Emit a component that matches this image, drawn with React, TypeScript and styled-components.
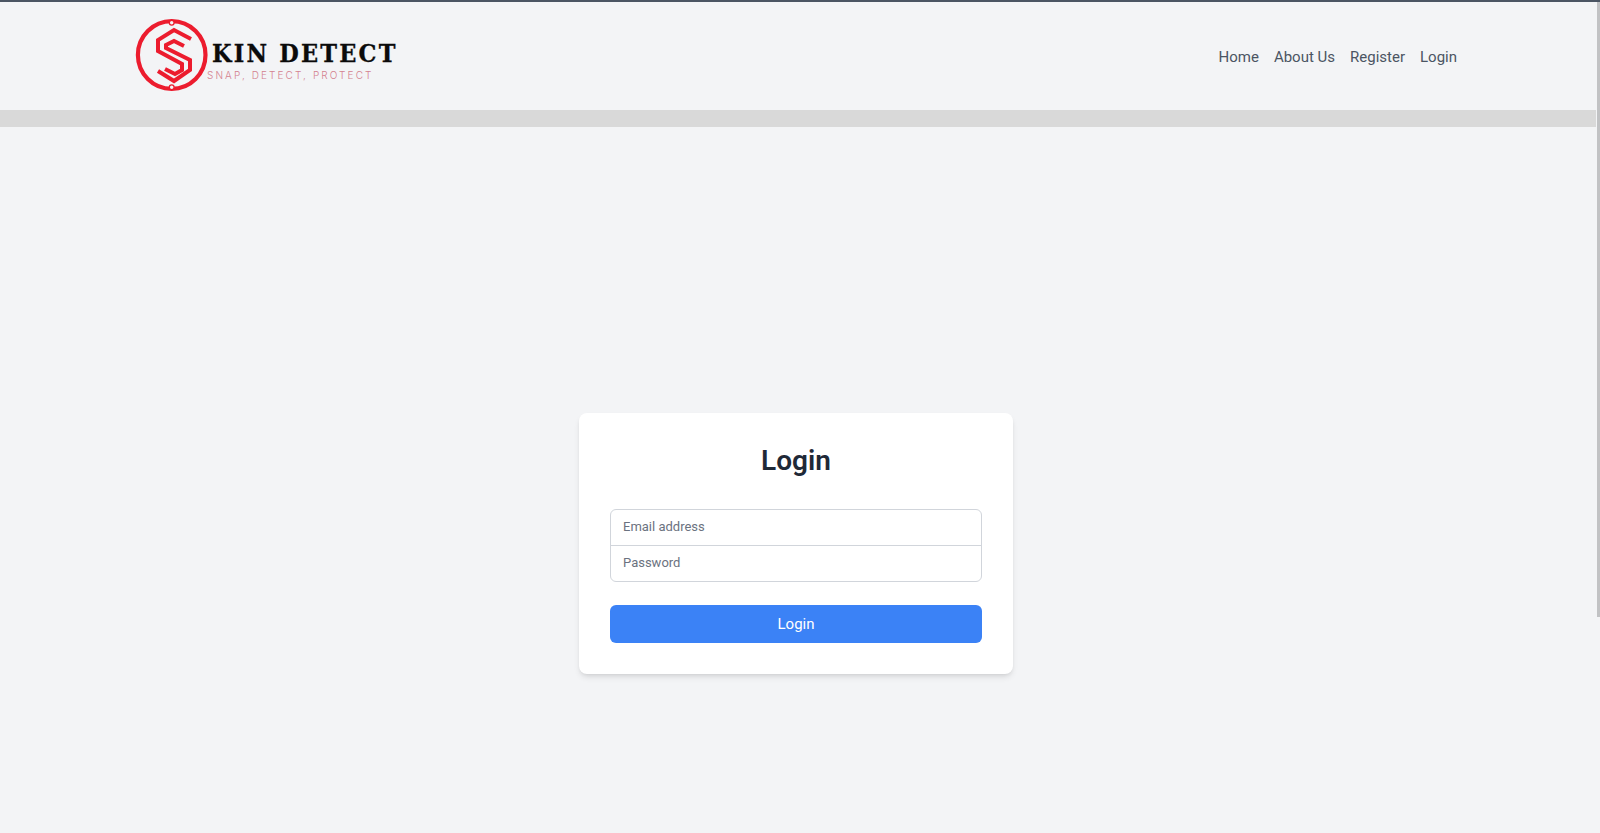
import styled, { createGlobalStyle } from 'styled-components';

const navLinks = ['Home', 'About Us', 'Register', 'Login'];

export default function App() {
  return (
    <>
      <GlobalStyle />
      <Shell>
        <Page>
          <Header>
            <Logo>
              <LogoMark viewBox="0 0 80 80">
                <circle cx="41.7" cy="41" r="33.8" fill="none" stroke="#ec1c2e" strokeWidth="4.2" />
                <circle cx="41.7" cy="8.8" r="2.4" fill="#f3f4f6" stroke="#ec1c2e" strokeWidth="1.3" />
                <circle cx="41.7" cy="73.3" r="2.4" fill="#f3f4f6" stroke="#ec1c2e" strokeWidth="1.3" />
                <g transform="translate(2 1)" fill="none" stroke="#ec1c2e" strokeWidth="4">
                  <path d="M59 24 L42 15 L26 25 L26 36 L50 49 L50 55 L43 59 L33 54" />
                  <path d="M52 31 L42 26 L34 30 L34 33 L58 45 L58 55 L42 66 L26 56" />
                </g>
              </LogoMark>
              <LogoText>
                <LogoName>KIN DETECT</LogoName>
                <LogoTagline>SNAP, DETECT, PROTECT</LogoTagline>
              </LogoText>
            </Logo>
            <Nav>
              {navLinks.map((link) => (
                <NavLink key={link}>{link}</NavLink>
              ))}
            </Nav>
          </Header>
          <GrayBar />
          <Main>
            <Card>
              <Title>Login</Title>
              <InputGroup>
                <Field $first>Email address</Field>
                <Field>Password</Field>
              </InputGroup>
              <SubmitButton>Login</SubmitButton>
            </Card>
          </Main>
        </Page>
        <ScrollTrack>
          <ScrollThumb />
        </ScrollTrack>
      </Shell>
    </>
  );
}

const GlobalStyle = createGlobalStyle`
  html {
    background: #f3f4f6;
  }

  body {
    margin: 0;
    font-family: Roboto, 'Noto Sans', sans-serif;
  }
`;

const Shell = styled.div`
  height: 833px;
  box-sizing: border-box;
  overflow: hidden;
  display: flex;
  background: #f3f4f6;
  border-top: 2px solid #4b5563;
`;

const Page = styled.div`
  flex: 1;
  min-width: 0;
`;

const ScrollTrack = styled.div`
  width: 4px;
  display: flex;
  justify-content: flex-end;
`;

const ScrollThumb = styled.div`
  width: 3px;
  height: 615px;
  background: #c1c2c4;
`;

const Header = styled.header`
  height: 108px;
  padding: 0 139px 0 130px;
  display: flex;
  align-items: center;
  justify-content: space-between;
`;

const Logo = styled.div`
  display: flex;
  align-items: flex-start;
`;

const LogoMark = styled.svg`
  width: 80px;
  height: 80px;
  margin-top: -4px;
  flex-shrink: 0;
`;

const LogoText = styled.div`
  margin-left: -3px;
  padding-top: 22px;
  display: flex;
  flex-direction: column;
`;

const LogoName = styled.div`
  margin-left: 5px;
  font-family: 'DejaVu Serif Condensed', 'DejaVu Serif', serif;
  font-stretch: condensed;
  font-size: 25px;
  font-weight: 700;
  line-height: 27px;
  letter-spacing: 2.2px;
  color: #0b0b0b;
  -webkit-text-stroke: 0.3px #0b0b0b;
  white-space: nowrap;
`;

const LogoTagline = styled.div`
  margin-top: 2px;
  font-family: 'Inter', sans-serif;
  font-size: 10px;
  font-weight: 300;
  line-height: 12px;
  letter-spacing: 2.1px;
  color: #d4808e;
  white-space: nowrap;
`;

const Nav = styled.nav`
  display: flex;
  gap: 15px;
  padding-top: 2px;
`;

const NavLink = styled.a`
  font-size: 15px;
  line-height: 24px;
  font-weight: 400;
  color: #4b5563;
`;

const GrayBar = styled.div`
  height: 17px;
  background: #d9d9d9;
`;

const Main = styled.main`
  padding: 286px 4px 0 0;
  display: flex;
  justify-content: center;
`;

const Card = styled.div`
  width: 434px;
  height: 261px;
  box-sizing: border-box;
  padding: 31px 31px 30px;
  background: #fff;
  border-radius: 8px;
  box-shadow: 0 4px 6px -1px rgba(0, 0, 0, 0.1), 0 2px 4px -2px rgba(0, 0, 0, 0.1);
`;

const Title = styled.h2`
  margin: 0 0 31px;
  font-size: 28px;
  line-height: 34px;
  font-weight: 600;
  text-align: center;
  color: #1f2937;
`;

const InputGroup = styled.div`
  border: 1px solid #d1d5db;
  border-radius: 6px;
`;

const Field = styled.div<{ $first?: boolean }>`
  height: 33px;
  padding: 0 12px 2px;
  display: flex;
  align-items: center;
  font-size: 13px;
  color: #6b7280;
  border-bottom: ${({ $first }) => ($first ? '1px solid #d1d5db' : 'none')};
`;

const SubmitButton = styled.button`
  width: 100%;
  height: 38px;
  margin-top: 23px;
  border: none;
  border-radius: 6px;
  background: #3b82f6;
  color: #fff;
  font-family: inherit;
  font-size: 15px;
  font-weight: 400;
`;
